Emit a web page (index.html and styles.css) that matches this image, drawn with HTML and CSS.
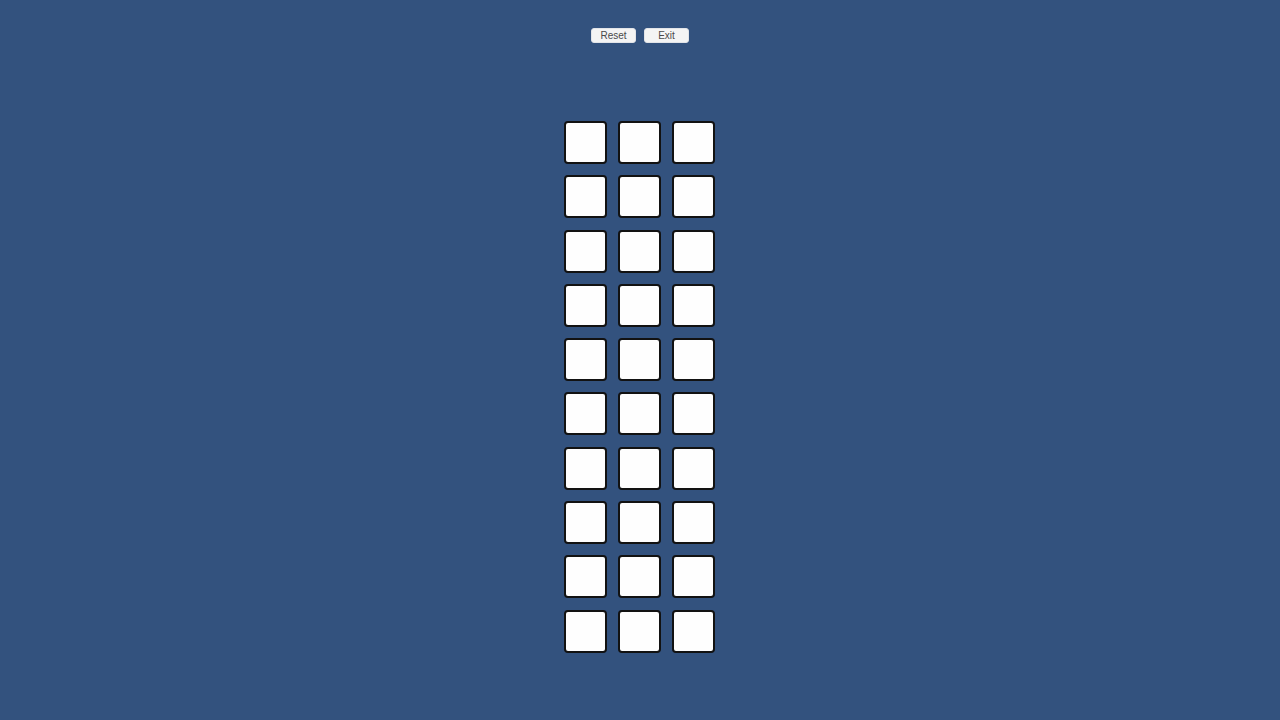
FILE: index.html
```html
<!DOCTYPE html>
<html>
<head>
<meta charset="utf-8">
<link rel="stylesheet" href="styles.css">
</head>
<body>
<div class="page">
  <div class="toolbar">
    <button class="btn">Reset</button>
    <button class="btn">Exit</button>
  </div>
  <div class="board">
    <div class="tile"></div><div class="tile"></div><div class="tile"></div>
    <div class="tile"></div><div class="tile"></div><div class="tile"></div>
    <div class="tile"></div><div class="tile"></div><div class="tile"></div>
    <div class="tile"></div><div class="tile"></div><div class="tile"></div>
    <div class="tile"></div><div class="tile"></div><div class="tile"></div>
    <div class="tile"></div><div class="tile"></div><div class="tile"></div>
    <div class="tile"></div><div class="tile"></div><div class="tile"></div>
    <div class="tile"></div><div class="tile"></div><div class="tile"></div>
    <div class="tile"></div><div class="tile"></div><div class="tile"></div>
    <div class="tile"></div><div class="tile"></div><div class="tile"></div>
  </div>
</div>
</body>
</html>
```
FILE: styles.css
```css
html, body {
  margin: 0;
  padding: 0;
}
body {
  background: #33527e;
  font-family: "Liberation Sans", Arial, sans-serif;
}
.page {
  width: 1280px;
  height: 720px;
  display: flex;
  flex-direction: column;
  align-items: center;
}
.toolbar {
  display: flex;
  gap: 8px;
  padding-top: 28px;
}
.btn {
  width: 45px;
  height: 15px;
  padding: 0;
  margin: 0;
  border: 1px solid #e2e4e8;
  border-radius: 3px;
  background: #f4f4f4;
  color: #4a4a4a;
  font-family: "Liberation Sans", Arial, sans-serif;
  font-size: 10px;
  line-height: 13px;
  text-align: center;
}
.board {
  margin-top: 78px;
  margin-right: 2px;
  display: grid;
  grid-template-columns: repeat(3, 43px);
  grid-auto-rows: 43px;
  column-gap: 11px;
  row-gap: 11.3px;
}
.tile {
  box-sizing: border-box;
  background: #fefefe;
  border: 2px solid #121212;
  border-radius: 4px;
}
```
